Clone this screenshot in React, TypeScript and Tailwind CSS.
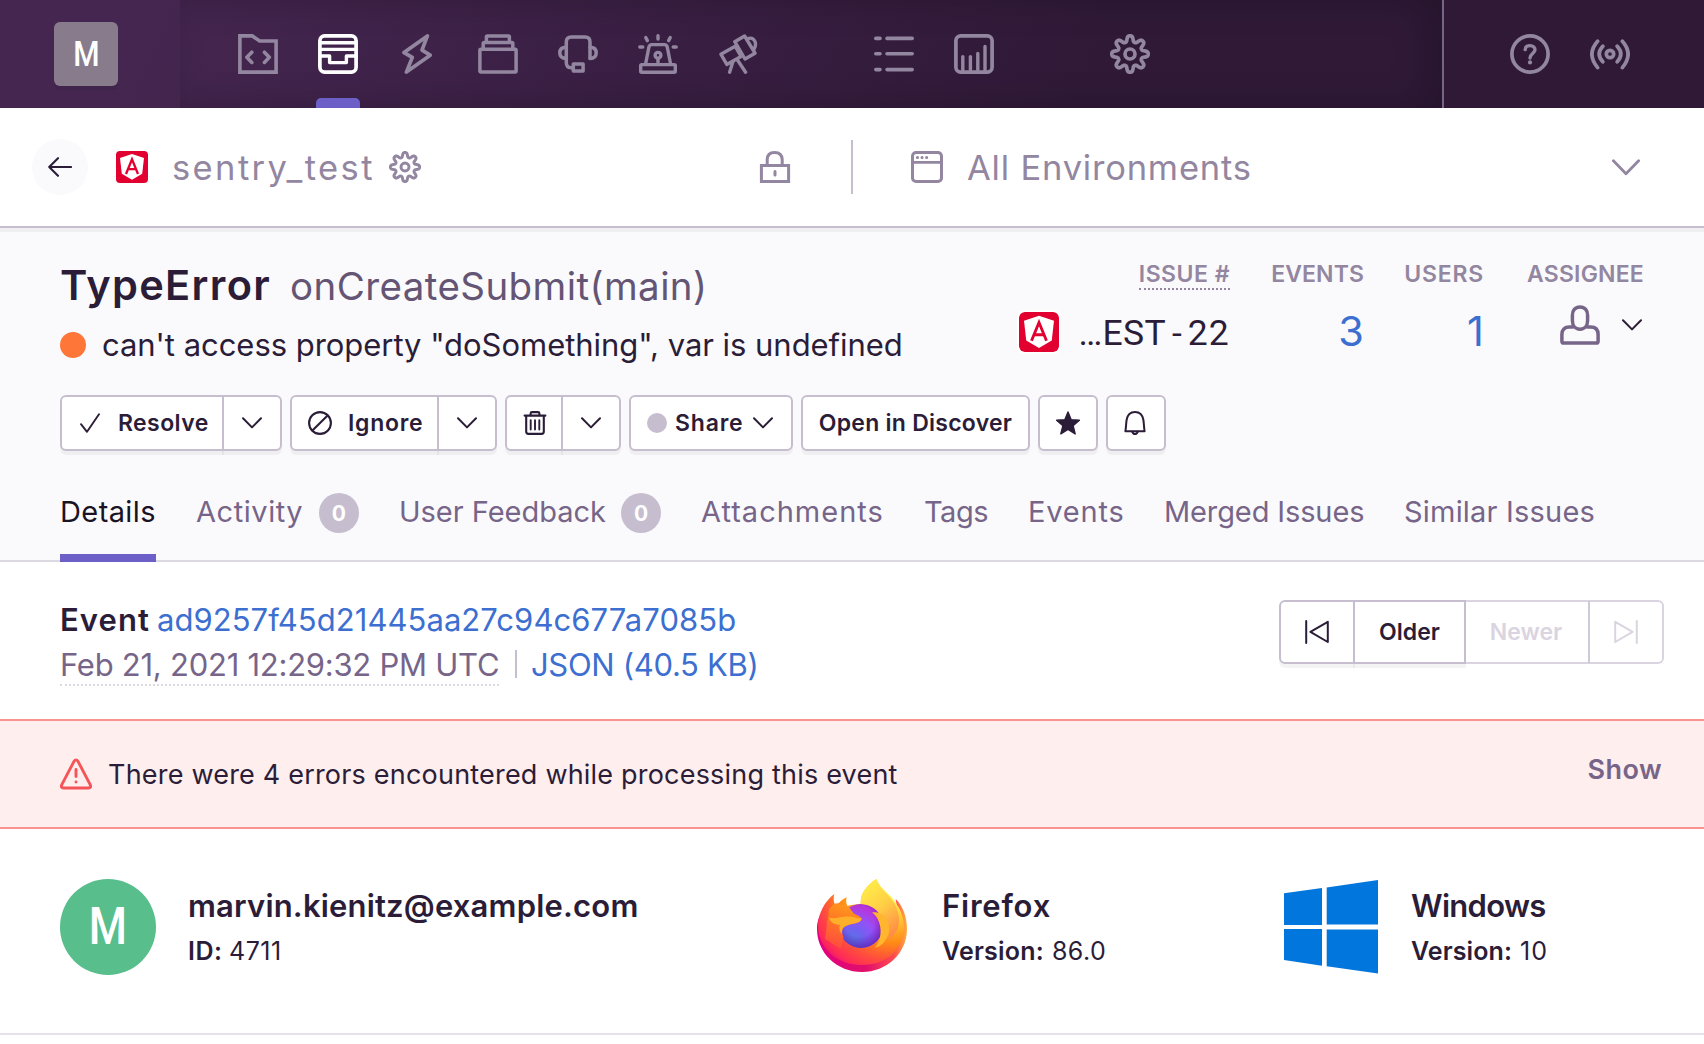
import type { ReactNode } from "react";

/* ---------- icons ---------- */

function Icon({ size = 40, box = 40, sw = 3.7, className = "", children }: { size?: number; box?: number; sw?: number; className?: string; children: ReactNode }) {
  return (
    <svg width={size} height={size} viewBox={`0 0 ${box} ${box}`} fill="none" stroke="currentColor" strokeWidth={sw} strokeLinecap="round" strokeLinejoin="round" className={`block shrink-0 ${className}`}>
      {children}
    </svg>
  );
}

/* Closed eight-toothed outline, sampled around a circle. */
const gearPath = (() => {
  const pts: string[] = [];
  for (let i = 0; i < 240; i++) {
    const t = (i / 240) * Math.PI * 2;
    const wave = Math.tanh(1.5 * Math.cos(8 * t)) / Math.tanh(1.5);
    const r = 15.3 + 2.9 * wave;
    pts.push(`${(20 + r * Math.sin(t)).toFixed(2)} ${(20 - r * Math.cos(t)).toFixed(2)}`);
  }
  return `M${pts.join("L")}Z`;
})();

const Gear = ({ size = 40 }: { size?: number }) => (
  <Icon size={size}>
    <path d={gearPath} />
    <circle cx="20" cy="20" r="5" />
  </Icon>
);

const Projects = () => (
  <Icon sw={3.6}>
    <path d="M1.9 1.9H14.3L21.6 7H38.1V38.1H1.9Z" strokeLinejoin="miter" />
    <path d="M13.8 18.2L8.9 23.3L13.8 28.4M26.4 18.2L31.3 23.3L26.4 28.4" />
  </Icon>
);
const Inbox = () => (
  <Icon>
    <rect x="1.9" y="1.9" width="36.2" height="36.2" rx="4.8" />
    <path d="M3 8.8H37M3 15.4H37M2 22H11.6V28.6H28.4V22H38" strokeWidth="3.4" />
  </Icon>
);
const Lightning = () => (
  <Icon>
    <path d="M29.4 1.9L6 18.6L14.3 23.4L8.4 38.1L32.2 21.2L24 16.2Z" />
  </Icon>
);
const Releases = () => (
  <Icon sw={3.5}>
    <rect x="1.9" y="15.3" width="36.2" height="22.8" rx="1" />
    <path d="M5.2 15.3V9.6Q5.2 8.6 6.2 8.6H33.8Q34.8 8.6 34.8 9.6V15.3M8.4 8.6V2.9Q8.4 1.9 9.4 1.9H30.4Q31.4 1.9 31.4 2.9V8.6" />
  </Icon>
);
const Support = () => (
  <Icon sw={3.5}>
    <path d="M8.3 24V8Q8.3 2.9 13.4 2.9H27Q32 2.9 32 8V24.3" />
    <path d="M8.3 13.2Q1.8 13.2 1.8 18.8T8.3 24.4M32 13.2Q38.2 13.2 38.2 18.8T32 24.4" />
    <path d="M8.3 24V28.6Q8.3 33.7 13 33.7H14.8" />
    <rect x="15.3" y="30.1" width="9.8" height="7" />
  </Icon>
);
const Siren = () => (
  <Icon sw={3.4}>
    <rect x="2.7" y="30.6" width="34.6" height="7.6" rx="1" />
    <path d="M7.6 30L10.9 13.2Q11.4 10.6 14 10.6H26.2Q28.8 10.6 29.3 13.2L32.6 30" />
    <circle cx="20" cy="21.3" r="2.9" />
    <path d="M20 25V30M20 1.8V5M7.8 3.6L9.4 6.6M32.2 3.6L30.6 6.6M1.8 13H4.8M35.2 13H38.2" />
  </Icon>
);
const Telescope = () => (
  <Icon sw={3.4}>
    <path d="M2.9 20.2L17.2 12.2L23 22.4L8.8 30.4Z" />
    <path d="M16.8 7.7L26.6 2L37 19.2L27 25Z" />
    <path d="M29.8 4.6C35.5 2.6 40 8.4 35.8 15.6" />
    <path d="M14.8 28L11.6 38.2M19.6 26.2L27.6 38.2" />
  </Icon>
);
const ListIcon = () => (
  <Icon sw={3.6}>
    <path d="M1.8 4.4H6M13 4.4H38.2M1.8 19.8H6M13 19.8H38.2M1.8 35.6H6M13 35.6H38.2" />
  </Icon>
);
const Chart = () => (
  <Icon>
    <rect x="1.9" y="1.9" width="36.2" height="36.2" rx="4.8" />
    <path d="M8.8 36V22.6M16.4 36V22.6M23.8 36V19.4M31 36V12.4" strokeWidth="3.4" />
  </Icon>
);
const Help = () => (
  <Icon>
    <circle cx="20" cy="20" r="18.1" />
    <path d="M15.2 15.6C15.4 13 17.3 11.6 20 11.6C22.9 11.6 25 13.3 25 15.8C25 19.4 20 19.8 20 24" strokeWidth="3.4" />
    <circle cx="20" cy="28.4" r="2.1" fill="currentColor" stroke="none" />
  </Icon>
);
const Broadcast = () => (
  <Icon>
    <circle cx="20" cy="20" r="3.7" />
    <path d="M12.8 12.2Q5.6 20 12.8 27.8M27.2 12.2Q34.4 20 27.2 27.8M7.6 7.2Q-3.8 20 7.6 33.6M32.4 7.2Q43.8 20 32.4 33.6" />
  </Icon>
);

const Lock = () => (
  <Icon size={32} box={32} sw={3}>
    <path d="M2.4 14.4H29.6V30.4H2.4Z" strokeLinejoin="miter" />
    <path d="M8.2 14V8.6Q8.2 1.5 15.6 1.5T23.2 8.6V14M16 20.4V24" />
  </Icon>
);
const WindowIcon = () => (
  <Icon size={32} box={32} sw={3}>
    <rect x="1.5" y="1.5" width="29" height="29" rx="3.6" />
    <path d="M2 11.3H30" strokeWidth="2.8" />
    <path d="M6.4 6.4H6.5M11 6.4H11.1M15.6 6.4H15.7" />
  </Icon>
);
const Chevron = ({ width = 20, height = 12 }: { width?: number; height?: number }) => (
  <svg width={width} height={height} viewBox="0 0 20 12" fill="none" stroke="currentColor" strokeWidth="2" strokeLinecap="round" strokeLinejoin="round" className="block shrink-0">
    <path d="M1 1.2L10 10.4L19 1.2" />
  </svg>
);
const Check = () => (
  <Icon size={20} box={20} sw={1.9}>
    <path d="M1 11.2L7 18.8L19 1.2" />
  </Icon>
);
const Ban = () => (
  <Icon size={24} box={24} sw={2.1}>
    <circle cx="12" cy="12" r="10.9" />
    <path d="M4.4 19.6L19.6 4.4" />
  </Icon>
);
const Trash = () => (
  <Icon size={24} box={24} sw={2.1}>
    <path d="M1.6 4.6H22.4M3.2 4.8V20.6Q3.2 22.9 5.4 22.9H18.6Q20.8 22.9 20.8 20.6V4.8" />
    <path d="M7.6 4.2V2.4Q7.6 1.1 9 1.1H15Q16.4 1.1 16.4 2.4V4.2" />
    <path d="M7.7 9.2V18.6M12 9.2V18.6M16.3 9.2V18.6" strokeWidth="1.9" />
  </Icon>
);
const Star = () => (
  <Icon size={24} box={24} sw={1.4}>
    <path fill="currentColor" d="M12 1L15.2 8.8L23.4 9.3L17.1 14.6L19.2 22.8L12 18.3L4.8 22.8L6.9 14.6L0.6 9.3L8.8 8.8Z" />
  </Icon>
);
const Bell = () => (
  <Icon size={24} box={24} sw={2} className="mr-[3px]">
    <path d="M2.4 20.2C3 17.6 3 12.8 3.6 9C4.4 4 7.6 1 12 1S19.6 4 20.4 9C21 12.8 21 17.6 21.6 20.2Z" />
    <path d="M9.2 20.6Q10 23 12 23T14.8 20.6" />
  </Icon>
);
const User = () => (
  <Icon sw={3.5}>
    <path d="M20 1.9C24.8 1.9 27.6 5.2 27.6 10.4V15.4C27.6 20.6 24.8 24.2 20 24.2S12.4 20.6 12.4 15.4V10.4C12.4 5.2 15.2 1.9 20 1.9Z" />
    <path d="M12.8 22H9.4Q1.9 22 1.9 29.6V36.2Q1.9 38.1 3.8 38.1H36.2Q38.1 38.1 38.1 36.2V29.6Q38.1 22 30.6 22H27.2" />
  </Icon>
);
const StepBack = () => (
  <Icon size={24} box={24} sw={2}>
    <path d="M1.2 1V23M22.8 1.8L5.4 11.8L22.8 22Z" />
  </Icon>
);
const StepForward = () => (
  <Icon size={24} box={24} sw={2}>
    <path d="M22.8 1V23M1.2 1.8L18.6 11.8L1.2 22Z" />
  </Icon>
);
const Warning = () => (
  <Icon size={32} box={32} sw={2.9}>
    <path d="M14 3.4Q16 0.4 18 3.4L30.2 26.6Q31.6 29.8 28.4 30H3.6Q0.4 29.8 1.8 26.6Z" />
    <path d="M16 11.4V18.6M16 24V24.1" />
  </Icon>
);

const Angular = ({ size, className = "" }: { size: number; className?: string }) => (
  <svg width={size} height={size} viewBox="0 0 32 32" className={`block shrink-0 ${className}`}>
    <rect width="32" height="32" rx="4" fill="#e1002f" />
    <path d="M16 3L28 7L26.2 22.8L16 28.8L5.8 22.8L4 7Z" fill="#fff" />
    <path d="M10 23L16 8.4L22 23M12.4 18.2H19.6" fill="none" stroke="#e1002f" strokeWidth="2.3" />
  </svg>
);

const FirefoxLogo = () => (
  <svg width="90" height="93" viewBox="0 0 90 93" className="block shrink-0">
    <defs>
      <radialGradient id="ff-body" gradientUnits="userSpaceOnUse" cx="76" cy="10" r="96">
        <stop offset="0.1" stopColor="#fff44f" />
        <stop offset="0.35" stopColor="#ffc030" />
        <stop offset="0.56" stopColor="#ff8a16" />
        <stop offset="0.74" stopColor="#ff4f3c" />
        <stop offset="0.88" stopColor="#ff2d55" />
        <stop offset="1" stopColor="#e5087b" />
      </radialGradient>
      <linearGradient id="ff-rim" x1="0" y1="0" x2="1" y2="0">
        <stop offset="0" stopColor="#e3007f" />
        <stop offset="0.55" stopColor="#e0106c" />
        <stop offset="0.85" stopColor="#ff4a50" />
        <stop offset="1" stopColor="#ffae3c" />
      </linearGradient>
      <radialGradient id="ff-globe" gradientUnits="userSpaceOnUse" cx="35" cy="62" r="40">
        <stop offset="0" stopColor="#5675e4" />
        <stop offset="0.32" stopColor="#7260f0" />
        <stop offset="0.55" stopColor="#9152f8" />
        <stop offset="0.85" stopColor="#b438dc" />
        <stop offset="1" stopColor="#b430d6" />
      </radialGradient>
      <linearGradient id="ff-flame" x1="0.2" y1="0" x2="0.7" y2="1">
        <stop offset="0" stopColor="#fff04a" />
        <stop offset="0.5" stopColor="#ffce45" />
        <stop offset="1" stopColor="#ff8a45" />
      </linearGradient>
      <linearGradient id="ff-face" x1="0.6" y1="0" x2="0.3" y2="1">
        <stop offset="0" stopColor="#ff9a1c" />
        <stop offset="0.4" stopColor="#ff7a24" />
        <stop offset="1" stopColor="#ff4a40" />
      </linearGradient>
      <radialGradient id="ff-edge" gradientUnits="userSpaceOnUse" cx="42" cy="42" r="28">
        <stop offset="0.55" stopColor="#5a1aa8" stopOpacity="0" />
        <stop offset="1" stopColor="#5a1aa8" stopOpacity="0.75" />
      </radialGradient>
    </defs>
    <path fill="url(#ff-rim)" d="M3 36C-1 44 0 54 0 50C0 74 20 93 45 93C70 93 90 74 90 50C90 38 86 27 78.7 20C79 24 80 26 80 30L45 60Z" />
    <path fill="url(#ff-body)" d="M17.3 15C8 22 1 34 1 48C2 70 20 86 45 86C70 86 87 70 87 48C87 40 84 31 80 26C74 14 64 12 59.3 0C50 6 43 14 43.7 25C38 25 33 26 30.3 27C29 24 29 21 29.7 18.3C26 20 23.5 22 22 24L17.5 25C16.5 22 16.5 18 17.3 15Z" />
    <circle cx="44" cy="47" r="22" fill="url(#ff-globe)" />
    <circle cx="44" cy="47" r="22" fill="url(#ff-edge)" />
    <path fill="url(#ff-flame)" d="M43.7 25C43 14 50 6 59.3 0C62 10 76 18 80 30C85 46 80 54 71 61C73 52 71 42 63.5 36C59 29 52 25 43.7 25Z" />
    <path fill="#ffb62e" d="M55 33.5C66 32 75 42 71.4 55C69 62 65 67 58 69C63 62 65 54 62.6 45C61 39 58 35.5 55 33.5Z" />
    <path fill="url(#ff-face)" d="M12 30L17.5 24.5L30.3 26.8C33 28 34 32 37 34.5C40 36.5 43 37 44.7 39.5C43 45 36 44.6 30 46.4C25 48 24 53 26.6 58L24 70L8 60Z" />
    <path fill="#ffb02a" d="M12 38.6C17 40.6 24 37.6 30 37.6C36 37.4 40 39.6 44.9 39.6C43 45.4 35 43.8 30 46.6C26 48 24.6 50 24.8 55C22 52 22 48 23 46C17 46 13 43 12 38.6Z" />
  </svg>
);

const WindowsLogo = () => (
  <svg width="94" height="94" viewBox="0 0 94 94" fill="#0176dc" className="mt-px block shrink-0">
    <path d="M0 13.3L38 8V45H0ZM42.7 7.5L94 0V44.4H42.7ZM0 49H38V85.7L0 80ZM42.7 49.4H94V93.4L42.7 86.2Z" />
  </svg>
);

/* ---------- pieces ---------- */

const NavItem = ({ children, active = false }: { children: ReactNode; active?: boolean }) => (
  <div className={`relative flex h-[108px] w-20 shrink-0 items-center justify-center ${active ? "text-white" : "text-[#9386a0]"}`}>
    {children}
    {active && <span className="absolute bottom-0 left-[18px] h-2.5 w-11 rounded-t-[5px] bg-[#6c5fc7]" />}
  </div>
);

const btn = "flex h-14 shrink-0 items-center border-2 border-[#c6becf] bg-white shadow-[0_4px_0_rgba(0,0,0,0.045)]";

function SplitButton({ left, right, children }: { left: string; right: string; children: ReactNode }) {
  return (
    <div className="flex shrink-0">
      <button className={`${btn} rounded-l-md ${left}`}>{children}</button>
      <button className={`${btn} -ml-0.5 justify-center rounded-r-md ${right}`}><Chevron /></button>
    </div>
  );
}

const Tab = ({ className, children }: { className: string; children: ReactNode }) => (
  <div className={`flex h-[71px] shrink-0 items-start justify-between whitespace-nowrap leading-[42px] ${className}`}>{children}</div>
);
const Badge = () => (
  <span className="mt-[2px] flex size-10 shrink-0 items-center justify-center rounded-full bg-[#c6becf] text-[21px] font-bold leading-none text-white">0</span>
);
const StatLabel = ({ children, className }: { children: ReactNode; className: string }) => (
  <span className={`text-[23px] font-semibold leading-[28px] text-[#9386a0] ${className}`}>{children}</span>
);

/* ---------- page ---------- */

export default function App() {
  return (
    <div className="h-[1044px] w-[1704px] overflow-hidden bg-white font-['Inter',sans-serif] text-[#2b1d38]">
      <nav className="flex h-[108px] bg-[linear-gradient(294.17deg,#2f1937_35.57%,#452650_92.42%)]">
        <div className="flex w-[180px] items-center pl-[54px]">
          <span className="flex size-16 items-center justify-center rounded-md bg-[#887b8b] font-['Roboto'] text-[35px] font-medium leading-none text-white shadow-[0_4px_0_rgba(0,0,0,0.05)]">
            <span className="scale-x-[0.86]">M</span>
          </span>
        </div>
        <div className="flex w-[1262px] pl-[38px] shadow-[inset_-14px_0_36px_rgba(0,0,0,0.2)]">
          <NavItem><Projects /></NavItem>
          <NavItem active><Inbox /></NavItem>
          <NavItem><Lightning /></NavItem>
          <NavItem><Releases /></NavItem>
          <NavItem><Support /></NavItem>
          <NavItem><Siren /></NavItem>
          <NavItem><Telescope /></NavItem>
          <div className="ml-[76px] flex">
            <NavItem><ListIcon /></NavItem>
            <NavItem><Chart /></NavItem>
          </div>
          <div className="ml-[76px] flex">
            <NavItem><Gear /></NavItem>
          </div>
        </div>
        <div className="flex flex-1 border-l-2 border-[#776589] pl-[46px]">
          <NavItem><Help /></NavItem>
          <NavItem><Broadcast /></NavItem>
        </div>
      </nav>

      <header className="flex h-[120px] items-center border-b-2 border-[#c6becf] pl-8 pr-16 text-[34.5px] leading-[44px] text-[#9386a0]">
        <button className="flex size-14 shrink-0 items-center justify-center rounded-full bg-[#fafafc] text-[#2b1d38]">
          <svg width="24" height="20" viewBox="0 0 24 20" fill="none" stroke="currentColor" strokeWidth="2.1" strokeLinecap="round" strokeLinejoin="round">
            <path d="M23 10H1.2M10 1.2L1.2 10L10 18.8" />
          </svg>
        </button>
        <Angular size={32} className="ml-7" />
        <span className="ml-6 w-[217px] shrink-0 pt-0.5 tracking-[2.4px]">sentry_test</span>
        <Gear size={32} />
        <div className="ml-[338px]"><Lock /></div>
        <span className="ml-[60px] h-[54px] w-0.5 shrink-0 bg-[#c6becf]" />
        <div className="ml-[58px]"><WindowIcon /></div>
        <span className="ml-6 flex-1 pt-0.5 tracking-[0.8px]">All Environments</span>
        <Chevron width={28} height={17} />
      </header>

      <section className="h-[334px] border-b-2 border-[#dcd9e2] bg-[#fafafc] px-[60px] shadow-[inset_0_4px_0_#efeef1]">
        <div className="flex h-[167px] justify-between pt-8">
          <div>
            <h1 className="flex items-baseline whitespace-nowrap pt-px leading-[48px]">
              <span className="w-[230px] text-[41.5px] font-semibold tracking-[1.35px]">TypeError</span>
              <span className="text-[38.5px] tracking-[0.42px] text-[#645574]">onCreateSubmit(main)</span>
            </h1>
            <p className="mt-[15px] flex items-center whitespace-nowrap text-[31px] leading-[40px] tracking-[-0.04px]">
              <span className="mr-4 size-[26px] rounded-full bg-[#ff7738]" />
              can't access property "doSomething", var is undefined
            </p>
          </div>
          <div className="flex gap-10">
            <div className="flex flex-col items-end">
              <StatLabel className="relative tracking-[0.5px]">
                ISSUE #
                <span className="absolute -bottom-0.5 left-0 w-full border-b-2 border-dotted border-[#9386a0]" />
              </StatLabel>
              <div className="mt-[22px] flex items-center">
                <Angular size={40} className="mr-[19px] rounded-[6px] shadow-[0_0_0_2px_#fff]" />
                <span className="pt-0.5 font-['Roboto'] text-[35.5px] leading-[42px]">
                  <span className="tracking-[0.3px]">…EST</span>
                  <span className="ml-[6px] mr-[6px]">-</span>
                  <span className="tracking-[1.2px]">22</span>
                </span>
              </div>
            </div>
            <div className="flex w-[94px] flex-col items-end">
              <StatLabel className="tracking-[0.1px]">EVENTS</StatLabel>
              <span className="mt-[19px] text-[41.5px] leading-[48px] text-[#3c6fd0]">3</span>
            </div>
            <div className="flex w-20 flex-col items-end">
              <StatLabel className="tracking-[0.8px]">USERS</StatLabel>
              <span className="mt-[19px] text-[41.5px] leading-[48px] text-[#3c6fd0]">1</span>
            </div>
            <div className="flex w-[120px] flex-col items-end">
              <StatLabel className="tracking-[0.2px]">ASSIGNEE</StatLabel>
              <div className="mt-[17px] flex items-center gap-[22px] pr-0.5">
                <span className="text-[#776589]"><User /></span>
                <Chevron />
              </div>
            </div>
          </div>
        </div>

        <div className="flex gap-2 text-[23px] font-semibold leading-none">
          <SplitButton left="w-[164px] pl-[18px] tracking-[0.4px]" right="w-[60px]">
            <Check /><span className="ml-[18px]">Resolve</span>
          </SplitButton>
          <SplitButton left="w-[149px] pl-4 tracking-[0.7px]" right="w-[60px]">
            <Ban /><span className="ml-4">Ignore</span>
          </SplitButton>
          <SplitButton left="w-[58px] pl-[16px]" right="w-[60px]">
            <Trash />
          </SplitButton>
          <button className={`${btn} w-[164px] rounded-md pl-4`}>
            <span className="size-5 rounded-full bg-[#c6becf]" />
            <span className="ml-2 w-[78px] text-left tracking-[0.8px]">Share</span>
            <Chevron />
          </button>
          <button className={`${btn} w-[229px] justify-center rounded-md tracking-[0.25px]`}>Open in Discover</button>
          <button className={`${btn} w-[60px] justify-center rounded-md`}><Star /></button>
          <button className={`${btn} w-[60px] justify-center rounded-md`}><Bell /></button>
        </div>

        <div className="mt-10 flex gap-10 text-[29px] text-[#776589]">
          <Tab className="w-24 border-b-8 border-[#6c5fc7] tracking-[0.4px] text-[#1a1324]">Details</Tab>
          <Tab className="w-[163px] tracking-[0.55px]">Activity<Badge /></Tab>
          <Tab className="w-[262px] tracking-[-0.03px]">User Feedback<Badge /></Tab>
          <Tab className="w-[183px] tracking-[1px]">Attachments</Tab>
          <Tab className="w-16 tracking-[-0.5px]">Tags</Tab>
          <Tab className="w-24 tracking-[0.8px]">Events</Tab>
          <Tab className="w-[200px] tracking-[-0.12px]">Merged Issues</Tab>
          <Tab className="w-[191px] tracking-[0.2px]">Similar Issues</Tab>
        </div>
      </section>

      <section className="flex h-[157px] justify-between pl-[60px] pr-10 text-[31px] leading-[45px]">
        <div className="pt-[35px]">
          <div className="flex whitespace-nowrap">
            <span className="w-[97px] font-semibold tracking-[1.1px]">Event</span>
            <span className="tracking-[0.05px] text-[#3c6fd0]">ad9257f45d21445aa27c94c677a7085b</span>
          </div>
          <div className="flex whitespace-nowrap">
            <span className="h-[44px] w-[439px] border-b-2 border-dotted border-[#dcd9e2] tracking-[-0.25px] text-[#776589]">Feb 21, 2021 12:29:32 PM UTC</span>
            <span className="ml-4 mt-2 h-7 w-0.5 bg-[#c6becf]" />
            <span className="ml-3.5 tracking-[-0.32px] text-[#3c6fd0]">JSON (40.5 KB)</span>
          </div>
        </div>
        <div className="mt-[38px] flex h-16 text-[23px] font-semibold leading-none">
          <button className="z-10 flex w-[76px] items-center justify-center rounded-l-md border-2 border-[#c6becf] shadow-[0_4px_0_rgba(0,0,0,0.045)]"><StepBack /></button>
          <button className="z-10 -ml-0.5 flex w-[113px] items-center justify-center border-2 border-[#c6becf] shadow-[0_4px_0_rgba(0,0,0,0.045)]">Older</button>
          <button className="-ml-0.5 flex w-[126px] items-center justify-center border-y-2 border-r-2 border-y-[#dad4e0] border-r-[#cfc8d7] text-[#dad4e0]">Newer</button>
          <button className="flex w-[74px] items-center justify-center rounded-r-md border-y-2 border-r-2 border-[#dad4e0] text-[#dad4e0]"><StepForward /></button>
        </div>
      </section>

      <section className="flex h-[110px] justify-between border-y-2 border-[#fa9290] bg-[#feeeed] pl-[60px] pr-[42px] text-[27px] leading-[40px]">
        <div className="flex pt-[33px]">
          <span className="mt-1 text-[#f55459]"><Warning /></span>
          <span className="ml-4 whitespace-nowrap pt-px tracking-[0.2px]">There were 4 errors encountered while processing this event</span>
        </div>
        <span className="pt-[29px] font-semibold tracking-[0.4px] text-[#776589]">Show</span>
      </section>

      <section className="flex h-[206px] border-b-2 border-[#e7e1ec] pl-[60px] pt-[50px]">
        <div className="flex w-[757px]">
          <span className="flex size-24 items-center justify-center rounded-full bg-[#57be8c] font-['Roboto'] text-[52px] font-medium leading-none text-white">
            <span className="scale-x-[0.84]">M</span>
          </span>
          <div className="ml-8 pt-[7px]">
            <div className="text-[31px] font-semibold leading-[40px] tracking-[0.18px]">marvin.kienitz@example.com</div>
            <div className="mt-[7px] flex text-[25px] leading-[36px]">
              <span className="w-[41px] font-semibold tracking-[0.5px]">ID:</span>
              <span className="tracking-[0.5px]">4711</span>
            </div>
          </div>
        </div>
        <div className="flex w-[467px]">
          <FirefoxLogo />
          <div className="ml-[35px] pt-[7px]">
            <div className="text-[31px] font-semibold leading-[40px] tracking-[0.8px]">Firefox</div>
            <div className="mt-[7px] flex text-[25px] leading-[36px]">
              <span className="w-[110px] font-semibold tracking-[0.2px]">Version:</span>
              <span className="tracking-[0.4px]">86.0</span>
            </div>
          </div>
        </div>
        <div className="flex">
          <WindowsLogo />
          <div className="ml-[33px] pt-[7px]">
            <div className="text-[31px] font-semibold leading-[40px] tracking-[-0.7px]">Windows</div>
            <div className="mt-[7px] flex text-[25px] leading-[36px]">
              <span className="w-[109px] font-semibold tracking-[0.1px]">Version:</span>
              <span className="tracking-[1px]">10</span>
            </div>
          </div>
        </div>
      </section>
    </div>
  );
}
